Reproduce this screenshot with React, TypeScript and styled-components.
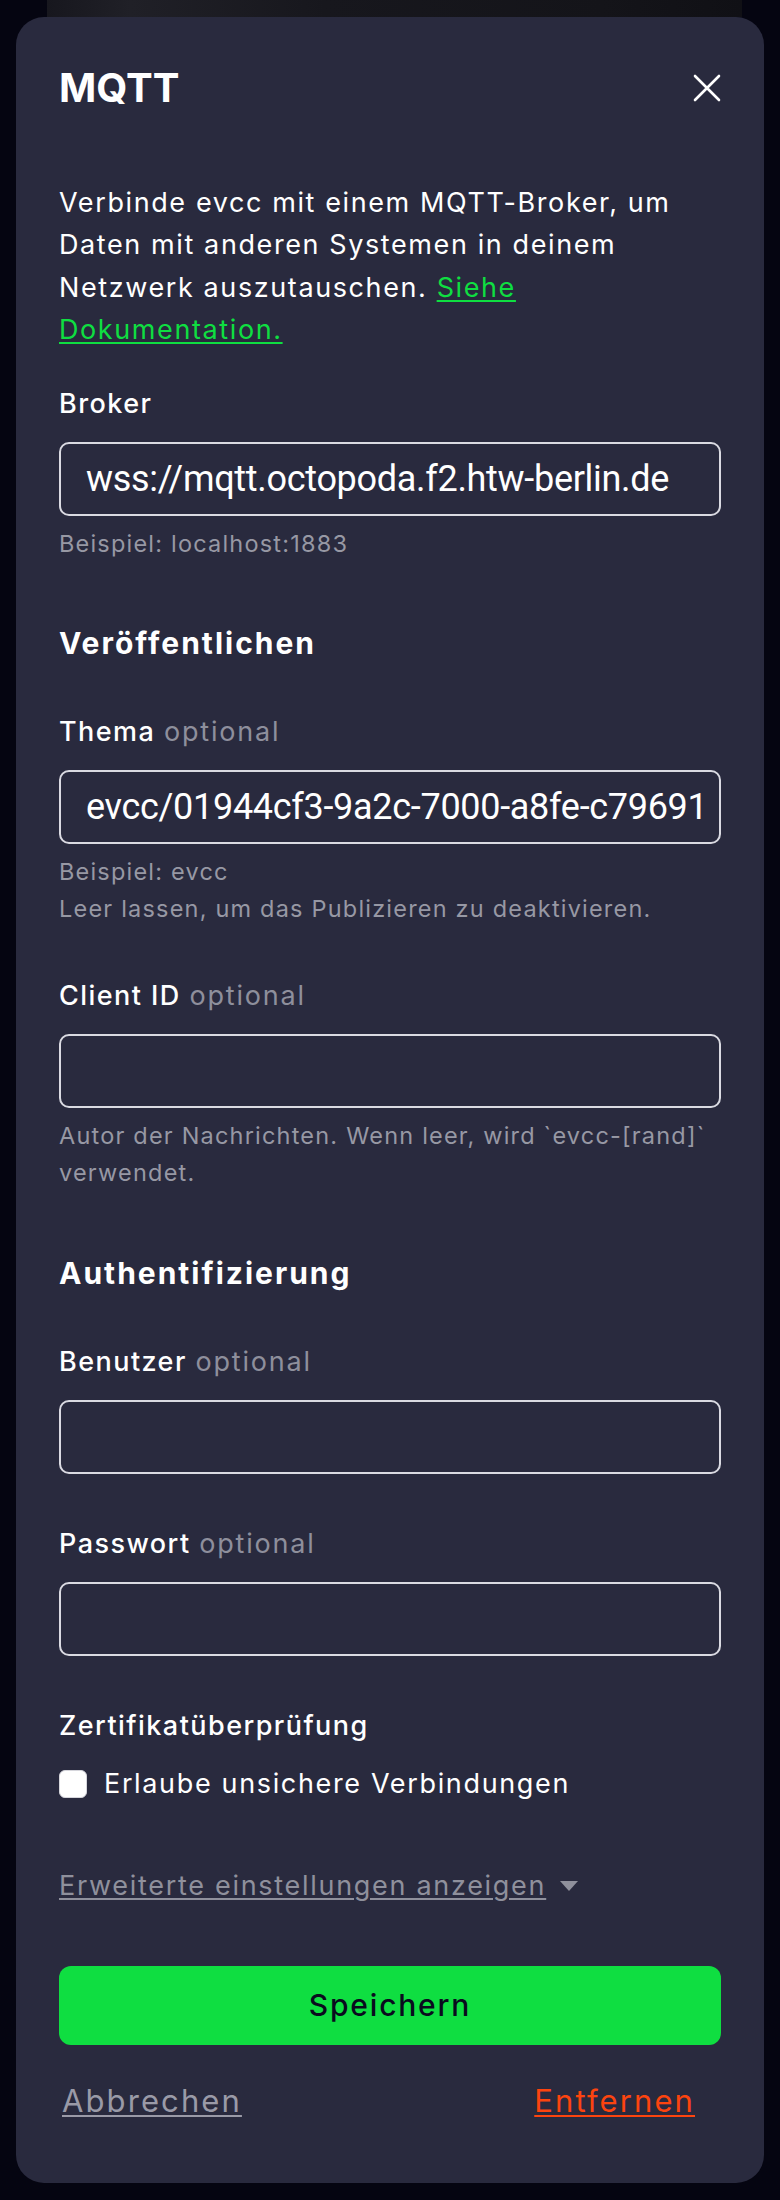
import React from "react";
import styled, { createGlobalStyle } from "styled-components";

const GlobalStyle = createGlobalStyle`
  * { box-sizing: border-box; }
  html, body { margin: 0; padding: 0; }
  body {
    background: #050511;
    font-family: Inter, "Open Sans", sans-serif;
    color: #ffffff;
    -webkit-font-smoothing: antialiased;
  }
`;

const Page = styled.div`
  min-height: 2200px;
  background: #050511;
  display: flex;
  flex-direction: column;
`;

const TopShade = styled.div`
  height: 17px;
  margin: 0 38px 0 47px;
  background: linear-gradient(90deg, #17171e 0%, #202027 12%, #17171d 40%, #141419 80%, #101015 100%);
`;

const Modal = styled.section`
  margin: 0 16px;
  background: #292a3e;
  border-radius: 28px;
  padding: 47px 43px 62px;
  display: flex;
  flex-direction: column;
`;

const Header = styled.header`
  display: flex;
  align-items: center;
  justify-content: space-between;
  height: 48px;
`;

const Title = styled.h2`
  margin: 0;
  font: 700 40px/48px Inter, sans-serif;
  color: #ffffff;
`;

const CloseButton = styled.button`
  width: 28px;
  height: 28px;
  padding: 0;
  border: 0;
  background: transparent;
  display: flex;
  cursor: pointer;
`;

const Intro = styled.p`
  margin: 70px 0 0;
  font: 400 27px/42.3px Inter, sans-serif;
  letter-spacing: 1.6px;
  color: #ffffff;
`;

const DocLink = styled.a`
  color: #0fde41;
  text-decoration: underline;
  text-decoration-thickness: 2px;
  text-underline-offset: 3px;
`;

const SectionTitle = styled.h3<{ $gap: number }>`
  margin: ${(p) => p.$gap}px 0 0;
  font: 700 30px/40px Inter, sans-serif;
  letter-spacing: 2px;
  color: #ffffff;
`;

const Field = styled.div<{ $gap: number }>`
  margin-top: ${(p) => p.$gap}px;
  display: flex;
  flex-direction: column;
`;

const Label = styled.label`
  display: block;
  margin-bottom: 20px;
  font: 500 27px/36px Inter, sans-serif;
  letter-spacing: 1.45px;
  color: #ffffff;
`;

const Optional = styled.span`
  font-weight: 400;
  letter-spacing: 1.8px;
  color: #8e8f9c;
`;

const TextInput = styled.input`
  width: 100%;
  height: 74px;
  margin: 0;
  padding: 0 14px 0 25px;
  border: 2px solid #dadae2;
  border-radius: 10px;
  background: transparent;
  color: #ffffff;
  font: 400 36px Roboto, sans-serif;
  letter-spacing: -0.3px;
  outline: none;
`;

const Hint = styled.div`
  margin-top: 9px;
  font: 400 23.5px/37px Inter, sans-serif;
  letter-spacing: 1.2px;
  color: #9798a4;
`;

const HintLine = styled.div``;

const CheckRow = styled.label`
  display: flex;
  align-items: center;
  gap: 17px;
  min-height: 40px;
  font: 400 27px/36px Inter, sans-serif;
  letter-spacing: 1.65px;
  color: #ffffff;
`;

const CheckBox = styled.input`
  appearance: none;
  -webkit-appearance: none;
  width: 28px;
  height: 28px;
  margin: 0;
  flex: none;
  background: #ffffff;
  border: 1px solid #d6d6dc;
  border-radius: 6px;
`;

const AdvancedToggle = styled.button`
  margin-top: 63.5px;
  align-self: flex-start;
  display: inline-flex;
  align-items: center;
  gap: 14px;
  padding: 0;
  border: 0;
  background: transparent;
  cursor: pointer;
  font: 400 27px/36px Inter, sans-serif;
  letter-spacing: 1.7px;
  color: #8f909c;
`;

const ToggleText = styled.span`
  text-decoration: underline;
  text-decoration-thickness: 2px;
  text-underline-offset: 3px;
`;

const SaveButton = styled.button`
  margin-top: 62px;
  width: 100%;
  height: 79px;
  border: 0;
  border-radius: 12px;
  background: #0fde41;
  color: #0a0b1e;
  font: 500 30px/40px Inter, sans-serif;
  letter-spacing: 1.8px;
  cursor: pointer;
`;

const Footer = styled.div`
  margin-top: 36.7px;
  display: flex;
  justify-content: space-between;
  align-items: center;
`;

const LinkButton = styled.button<{ $danger?: boolean }>`
  padding: 0;
  margin: ${(p) => (p.$danger ? "0 26px 0 0" : "0 0 0 3px")};
  border: 0;
  background: transparent;
  cursor: pointer;
  font: 400 31px/40px Inter, sans-serif;
  letter-spacing: 2.1px;
  color: ${(p) => (p.$danger ? "#fc440f" : "#9a9aa7")};
  text-decoration: underline;
  text-decoration-thickness: 2px;
  text-underline-offset: 3px;
`;

const CloseIcon = () => (
  <svg width="28" height="28" viewBox="0 0 28 28" fill="none">
    <path d="M2 2 L26 26 M26 2 L2 26" stroke="#ffffff" strokeWidth="2.6" strokeLinecap="round" />
  </svg>
);

const CaretDown = () => (
  <svg width="18" height="10" viewBox="0 0 18 10">
    <polygon points="0,0 18,0 9,10" fill="#8f909c" />
  </svg>
);

export default function App() {
  return (
    <>
      <GlobalStyle />
      <Page>
        <TopShade />
        <Modal>
          <Header>
            <Title>MQTT</Title>
            <CloseButton aria-label="Schließen">
              <CloseIcon />
            </CloseButton>
          </Header>

          <Intro>
            Verbinde evcc mit einem MQTT-Broker, um Daten mit anderen Systemen in deinem Netzwerk auszutauschen.{" "}
            <DocLink href="#">Siehe Dokumentation.</DocLink>
          </Intro>

          <Field $gap={35}>
            <Label>Broker</Label>
            <TextInput defaultValue="wss://mqtt.octopoda.f2.htw-berlin.de" />
            <Hint>Beispiel: localhost:1883</Hint>
          </Field>

          <SectionTitle $gap={61}>Veröffentlichen</SectionTitle>

          <Field $gap={51}>
            <Label>
              Thema <Optional>optional</Optional>
            </Label>
            <TextInput defaultValue="evcc/01944cf3-9a2c-7000-a8fe-c79691" />
            <Hint>
              <HintLine>Beispiel: evcc</HintLine>
              <HintLine>Leer lassen, um das Publizieren zu deaktivieren.</HintLine>
            </Hint>
          </Field>

          <Field $gap={51}>
            <Label>
              Client ID <Optional>optional</Optional>
            </Label>
            <TextInput defaultValue="" />
            <Hint>Autor der Nachrichten. Wenn leer, wird `evcc-[rand]` verwendet.</Hint>
          </Field>

          <SectionTitle $gap={62}>Authentifizierung</SectionTitle>

          <Field $gap={51}>
            <Label>
              Benutzer <Optional>optional</Optional>
            </Label>
            <TextInput defaultValue="" />
          </Field>

          <Field $gap={52}>
            <Label>
              Passwort <Optional>optional</Optional>
            </Label>
            <TextInput type="password" defaultValue="" />
          </Field>

          <Field $gap={52}>
            <Label>Zertifikatüberprüfung</Label>
            <CheckRow>
              <CheckBox type="checkbox" />
              Erlaube unsichere Verbindungen
            </CheckRow>
          </Field>

          <AdvancedToggle type="button">
            <ToggleText>Erweiterte einstellungen anzeigen</ToggleText>
            <CaretDown />
          </AdvancedToggle>

          <SaveButton type="button">Speichern</SaveButton>

          <Footer>
            <LinkButton type="button">Abbrechen</LinkButton>
            <LinkButton type="button" $danger>
              Entfernen
            </LinkButton>
          </Footer>
        </Modal>
      </Page>
    </>
  );
}
